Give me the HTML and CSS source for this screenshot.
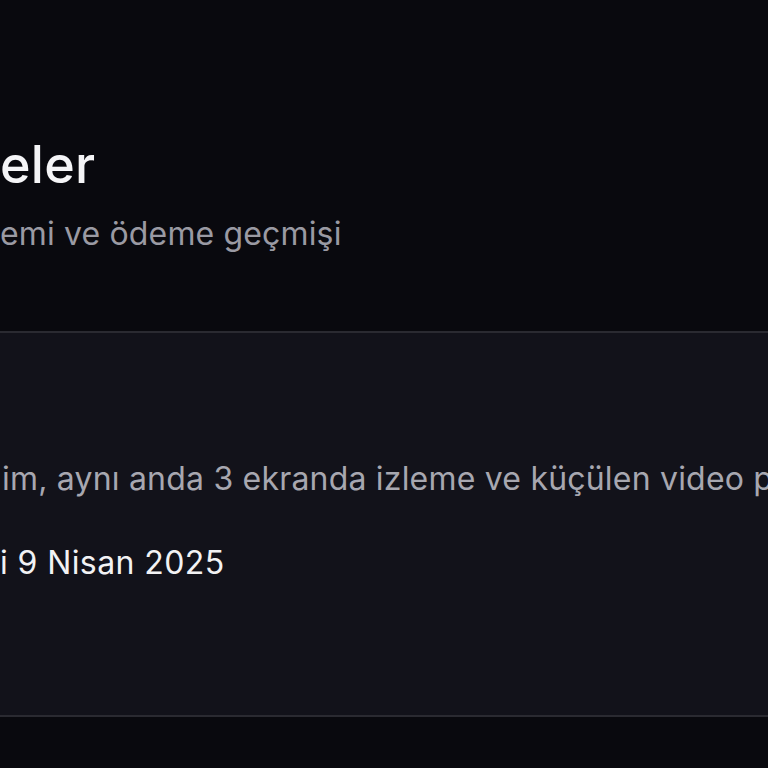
FILE: index.html
```html
<!DOCTYPE html>
<html lang="tr">
<head>
<meta charset="utf-8">
<title>Ödemeler</title>
<link rel="stylesheet" href="styles.css">
</head>
<body>
<div class="page">
  <header class="page-header">
    <h1 class="title">eler</h1>
    <p class="subtitle">emi ve ödeme geçmişi</p>
  </header>
  <section class="card">
    <p class="desc">im, aynı anda 3 ekranda izleme ve küçülen video p</p>
    <p class="date">i 9 Nisan 2025</p>
  </section>
</div>
</body>
</html>
```
FILE: styles.css
```css
* { box-sizing: border-box; }
html, body {
  margin: 0;
  padding: 0;
  background: #09090e;
  height: 100%;
  overflow: hidden;
}
.page {
  font-family: Inter, "Noto Sans", sans-serif;
  width: 768px;
  overflow: hidden;
}
.page-header {
  padding: 134px 0 77px 0;
}
.title {
  margin: 0;
  font-size: 52px;
  line-height: 62px;
  font-weight: 500;
  color: #f5f5f7;
  white-space: nowrap;
  letter-spacing: 0.3px;
}
.subtitle {
  margin: 18px 0 0 0;
  font-size: 32px;
  line-height: 40px;
  color: #9a9aa3;
  white-space: nowrap;
  letter-spacing: 0.15px;
}
.card {
  background: #12121a;
  border-top: 2px solid #2a2a31;
  border-bottom: 2px solid #2a2a31;
  padding: 122px 0 128px 0;
}
.desc {
  margin: 0;
  padding-left: 2px;
  font-size: 32px;
  line-height: 48px;
  color: #a7a7b0;
  white-space: nowrap;
  letter-spacing: 0.2px;
}
.date {
  margin: 36px 0 0 0;
  font-size: 32px;
  line-height: 48px;
  color: #f2f2f4;
  white-space: nowrap;
  letter-spacing: 0.4px;
}
```
